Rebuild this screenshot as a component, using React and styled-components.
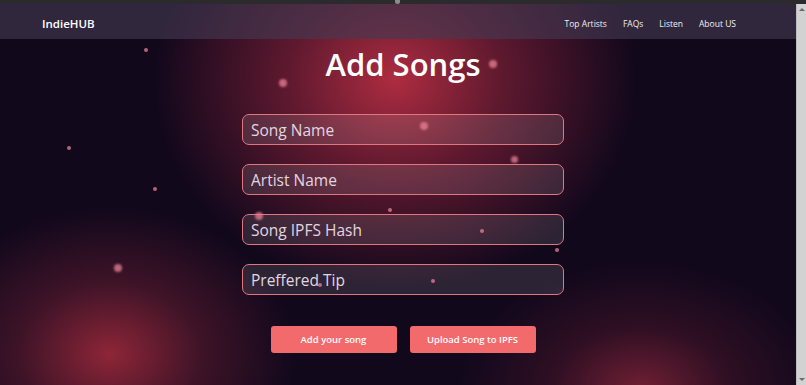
import React from "react";
import styled, { createGlobalStyle } from "styled-components";

const GlobalStyle = createGlobalStyle`
  html, body { margin: 0; padding: 0; background: #120818; overflow: hidden; }
  * { box-sizing: border-box; }
`;

const Shell = styled.div`
  display: flex;
  flex-direction: column;
  width: 806px;
  height: 385px;
  font-family: "Open Sans", "Noto Sans", sans-serif;
`;

const BrowserStrip = styled.div`
  height: 4px;
  background: #2b2b2e;
  display: flex;
  justify-content: center;
`;

const TabDot = styled.div`
  width: 5px;
  height: 4px;
  border-radius: 0 0 3px 3px;
  background: #8a8a90;
  margin-left: -12px;
`;

const Body = styled.div`
  flex: 1;
  display: flex;
  min-height: 0;
`;

const Page = styled.div`
  position: relative;
  flex: 1;
  display: flex;
  flex-direction: column;
  overflow: hidden;
  background:
    radial-gradient(ellipse 240px 210px at 395px 75px, rgba(182, 46, 66, 0.95) 0%, rgba(140, 35, 58, 0.62) 45%, rgba(60, 15, 35, 0) 100%),
    radial-gradient(ellipse 185px 145px at 110px 350px, rgba(152, 40, 58, 0.92) 0%, rgba(105, 30, 50, 0.5) 50%, rgba(40, 10, 30, 0) 100%),
    radial-gradient(ellipse 180px 125px at 640px 385px, rgba(125, 34, 54, 0.88) 0%, rgba(85, 24, 44, 0.42) 50%, rgba(40, 10, 30, 0) 100%),
    #12081c;
`;

const Scrollbar = styled.div`
  width: 10px;
  background: #d2d2d2;
  display: flex;
  flex-direction: column;
  justify-content: space-between;
  align-items: center;
  border-left: 1px solid #bdbdbd;
`;

const ScrollArrow = styled.div`
  width: 0;
  height: 0;
  border-left: 3px solid transparent;
  border-right: 3px solid transparent;
  border-${(p) => (p.$down ? "top" : "bottom")}: 3px solid #6a6a6a;
  margin: 4px 0;
`;

const Nav = styled.nav`
  height: 35px;
  display: flex;
  align-items: center;
  justify-content: space-between;
  padding: 3px 60px 0 42px;
  background: rgba(68, 58, 82, 0.62);
  position: relative;
  z-index: 1;
`;

const Brand = styled.div`
  color: #ffffff;
  font-weight: 600;
  font-size: 11.5px;
`;

const Links = styled.div`
  display: flex;
  gap: 16px;
`;

const NavLink = styled.a`
  color: #f2eef4;
  font-size: 8.5px;
  text-decoration: none;
`;

const Main = styled.main`
  display: flex;
  flex-direction: column;
  align-items: center;
  padding: 2px 0 0 10px;
  position: relative;
  z-index: 1;
`;

const Title = styled.h1`
  margin: 0 0 27px;
  color: #ffffff;
  font-size: 31px;
  font-weight: 600;
  line-height: 46px;
`;

const Form = styled.form`
  display: flex;
  flex-direction: column;
  gap: 19px;
  width: 322px;
`;

const Field = styled.input`
  height: 31px;
  width: 100%;
  border: 1.5px solid #e07680;
  border-radius: 7px;
  background: rgba(255, 255, 255, 0.11);
  color: #e6dce6;
  font-family: "Open Sans", "Noto Sans", sans-serif;
  font-size: 15.5px;
  padding: 0 8px;
  outline: none;
  &::placeholder { color: #e2d6e0; opacity: 1; }
`;

const Buttons = styled.div`
  display: flex;
  gap: 13px;
  margin-top: 31px;
`;

const Button = styled.button`
  width: 126px;
  height: 27px;
  border: none;
  border-radius: 3px;
  background: #f26a6c;
  color: #ffffff;
  font-family: "Open Sans", "Noto Sans", sans-serif;
  font-weight: 600;
  font-size: 9.5px;
`;

const Particle = styled.span`
  position: absolute;
  border-radius: 50%;
  background: rgba(235, 130, 150, 0.75);
  filter: blur(${(p) => (p.$size > 5 ? 1 : 0.4)}px);
  pointer-events: none;
  z-index: 2;
`;

const particles = [
  [146, 46, 4], [283, 79, 8], [493, 60, 8], [424, 122, 8], [514, 155, 7],
  [69, 144, 4], [155, 185, 4], [390, 206, 4], [259, 212, 8], [482, 227, 4],
  [557, 246, 4], [118, 264, 8], [433, 277, 4], [320, 281, 4],
];

export default function App() {
  return (
    <>
      <GlobalStyle />
      <Shell>
        <BrowserStrip>
          <TabDot />
        </BrowserStrip>
        <Body>
          <Page>
            {particles.map(([x, y, s], i) => (
              <Particle
                key={i}
                $size={s}
                style={{ left: x - s / 2, top: y - s / 2, width: s, height: s }}
              />
            ))}
            <Nav>
              <Brand>IndieHUB</Brand>
              <Links>
                <NavLink>Top Artists</NavLink>
                <NavLink>FAQs</NavLink>
                <NavLink>Listen</NavLink>
                <NavLink>About US</NavLink>
              </Links>
            </Nav>
            <Main>
              <Title>Add Songs</Title>
              <Form onSubmit={(e) => e.preventDefault()}>
                <Field placeholder="Song Name" />
                <Field placeholder="Artist Name" />
                <Field placeholder="Song IPFS Hash" />
                <Field placeholder="Preffered Tip" />
              </Form>
              <Buttons>
                <Button>Add your song</Button>
                <Button>Upload Song to IPFS</Button>
              </Buttons>
            </Main>
          </Page>
          <Scrollbar>
            <ScrollArrow />
            <ScrollArrow $down />
          </Scrollbar>
        </Body>
      </Shell>
    </>
  );
}
